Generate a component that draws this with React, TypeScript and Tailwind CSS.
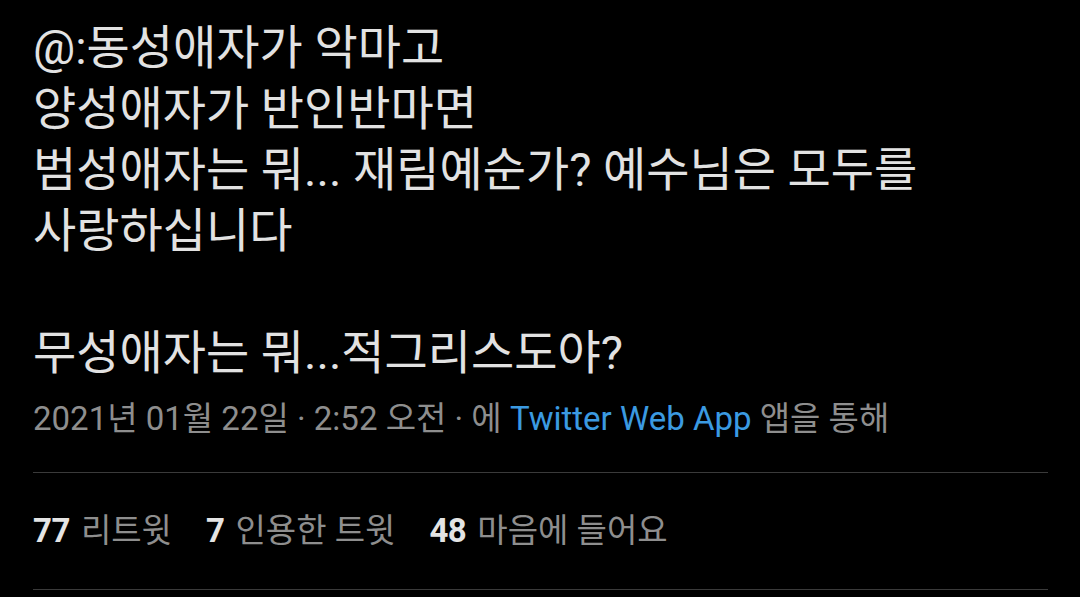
import React from 'react';

const font = { fontFamily: 'Roboto, "Noto Sans CJK KR", sans-serif' };

const Stat: React.FC<{ n: string; label: string }> = ({ n, label }) => (
  <span className="flex items-baseline gap-[11px]">
    <span className="font-bold text-[#e4e4e4] tracking-[-0.5px]">{n}</span>
    <span className="text-[#8e8e8e]">{label}</span>
  </span>
);

const App: React.FC = () => {
  return (
    <div className="w-[1080px] h-[597px] bg-black overflow-hidden" style={font}>
      <div className="pl-[33px] pr-[32px] pt-[17px]">
        <div className="text-[47px] leading-[61px] text-[#e2e2e2] whitespace-pre-line">
          {'@:동성애자가 악마고\n양성애자가 반인반마면\n범성애자는 뭐... 재림예순가? 예수님은 모두를\n사랑하십니다\n\n무성애자는 뭐...적그리스도야?'}
        </div>
        <div className="mt-[16px] text-[33px] leading-[40px] text-[#8e8e8e]">
          2021년 01월 22일 · 2:52 오전 · 에 <span className="text-[#3b9ae1]">Twitter Web App</span> 앱을 통해
        </div>
        <div className="mt-[33px] border-t border-[#3a3a3a]" />
        <div className="h-[116px] flex items-center gap-[34px] text-[33px]">
          <Stat n="77" label="리트윗" />
          <Stat n="7" label="인용한 트윗" />
          <Stat n="48" label="마음에 들어요" />
        </div>
        <div className="border-t border-[#3a3a3a]" />
      </div>
    </div>
  );
};

export default App;
